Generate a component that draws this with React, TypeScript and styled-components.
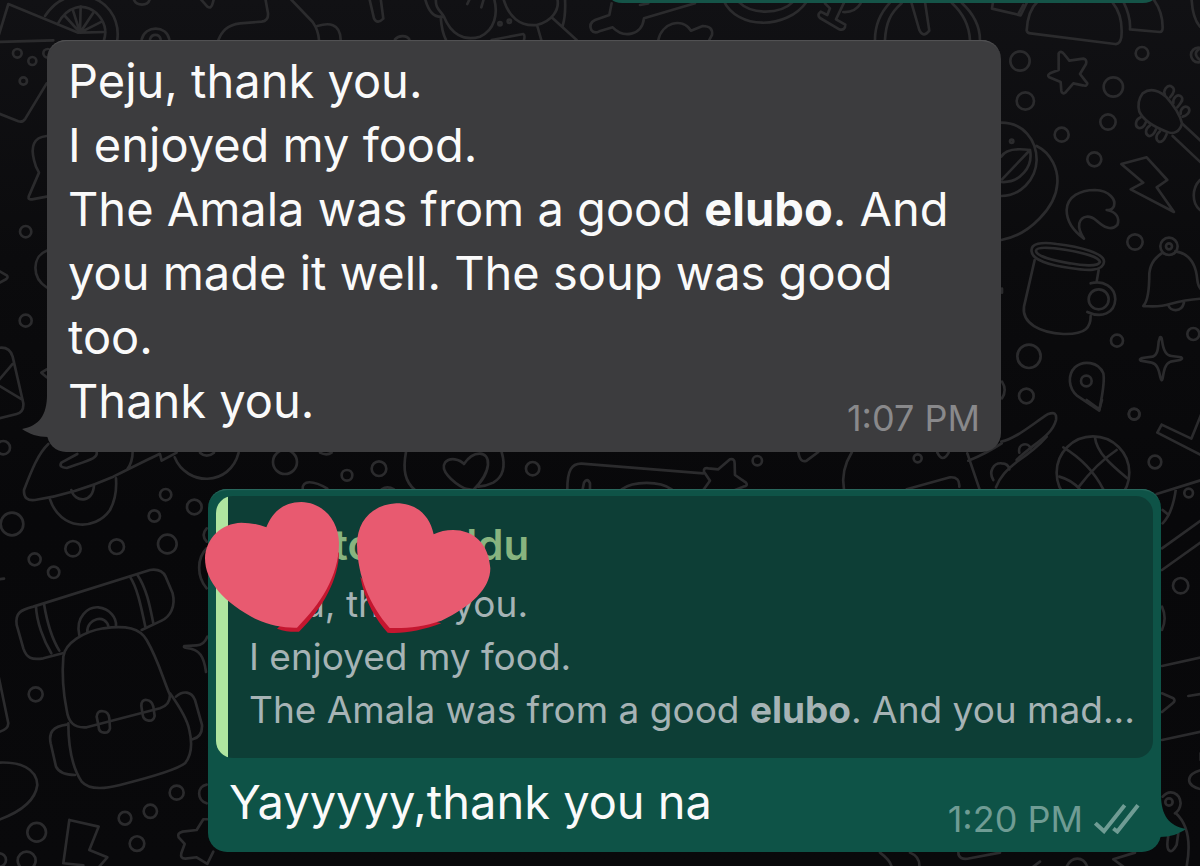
import React from "react";
import styled, { createGlobalStyle } from "styled-components";

const GlobalStyle = createGlobalStyle`
  * { box-sizing: border-box; }
  body {
    margin: 0;
    background: #09090b;
    font-family: Inter, "Liberation Sans", sans-serif;
  }
`;

type Side = "in" | "out";

const Screen = styled.main`
  position: relative;
  min-height: 100vh;
  overflow: hidden;
  background: linear-gradient(#111114, #0b0b0d 30%, #08080a 60%, #09090b);
`;

const Wallpaper = styled.svg`
  position: absolute;
  inset: 0;
  width: 100%;
  height: 100%;
  fill: none;
  stroke: #2b2b2d;
  stroke-width: 8;
  stroke-linecap: round;
  stroke-linejoin: round;
`;

const Thread = styled.div`
  position: relative;
  display: flex;
  flex-direction: column;
  gap: 37px;
  padding: 0 39px 14px 47px;
`;

const Clipped = styled.div`
  display: flex;
  align-items: flex-end;
  justify-content: flex-end;
  height: 3px;
  overflow: hidden;
`;

const PreviousBubble = styled.div`
  flex: none;
  width: 50%;
  height: 60px;
  border-radius: 18px;
  background: #155448;
`;

const Bubble = styled.article<{ $side: Side }>`
  position: relative;
  margin-left: ${(p) => (p.$side === "out" ? "161px" : "0")};
  margin-right: ${(p) => (p.$side === "in" ? "160px" : "0")};
  padding: ${(p) => (p.$side === "in" ? "9px 0 19px" : "7px 0 18px")};
  border-radius: 19px;
  background: ${(p) => (p.$side === "in" ? "#3c3c3e" : "#0e5347")};
  box-shadow: inset 0 2px 1px -1px ${(p) => (p.$side === "in" ? "#545456" : "#2c6a5f")};
`;

const Tail = styled.svg<{ $side: Side }>`
  position: absolute;
  bottom: 15px;
  width: 30px;
  height: 42px;
  fill: ${(p) => (p.$side === "in" ? "#3c3c3e" : "#0e5347")};
  ${(p) => (p.$side === "in" ? "left: -25px;" : "right: -25px; transform: scaleX(-1);")}
`;

const Text = styled.p`
  margin: 0;
  padding: 0 21px;
  color: #fafafa;
  font-size: 47px;
  line-height: 64px;
`;

const LastLine = styled.div`
  display: flex;
  align-items: flex-end;
  justify-content: space-between;
  padding-right: 21px;
`;

const Meta = styled.div<{ $side: Side }>`
  display: flex;
  align-items: center;
  gap: 11px;
  color: ${(p) => (p.$side === "in" ? "#89898b" : "#6f9c94")};
  font-size: 36px;
  line-height: 30px;
  white-space: nowrap;
`;

const Ticks = styled.svg`
  width: 46px;
  height: 31px;
  fill: none;
  stroke: currentColor;
  stroke-width: 12;
`;

const Quote = styled.blockquote`
  margin: 0 8px 12px;
  padding: 17px 18px 22px 33px;
  border-radius: 17px;
  background: linear-gradient(to right, #b0e5a0 12px, #0d3e36 12px);
  color: #a6b3b5;
  font-size: 37px;
  line-height: 53px;
`;

const QuoteName = styled.div`
  display: flex;
  gap: 78px;
  padding-left: 84px;
  color: #88b47f;
  font-size: 42px;
  font-weight: 600;
  line-height: 64px;
`;

const QuoteLine = styled.p`
  margin: 0;
  white-space: nowrap;
`;

const Hearts = styled.svg`
  position: absolute;
  top: 11px;
  left: -5px;
  width: 290px;
  height: 135px;
`;

const TAIL = "M25 0C25 20 17 31 0 34C7 39 16 42 26 42L30 42V0Z";

function BubbleTail({ side }: { side: Side }) {
  return (
    <Tail $side={side} viewBox="0 0 30 42" aria-hidden="true">
      <path d={TAIL} />
    </Tail>
  );
}

/* Each group is drawn at three times its size on the wallpaper. */
function Patch({ x, y, d, dots }: { x: number; y: number; d: string[]; dots: number[][] }) {
  return (
    <g transform={`translate(${x} ${y}) scale(0.3333)`}>
      {d.map((path) => (
        <path key={path} d={path} />
      ))}
      {dots.map(([cx, cy, r]) => (
        <circle key={`${cx}-${cy}-${r}`} cx={cx} cy={cy} r={r} />
      ))}
    </g>
  );
}

function Doodles() {
  return (
    <Wallpaper viewBox="0 0 1200 866" preserveAspectRatio="xMidYMin slice" aria-hidden="true">
      {/* drink and lemon slice, left edge */}
      <Patch
        x={0}
        y={0}
        d={[
          "M-5 110L25 12L235 98",
          "M-5 126L160 121",
          "M135 48C170 -5 215 -15 250 -12C320 -5 360 55 352 120",
          "M173 72C200 20 250 5 290 40C315 65 320 95 312 120",
          "M240 98L195 48M240 98L218 28M240 98L242 20M240 98L280 38M240 98L305 65M240 98L315 96",
          "M-5 340L55 364Q68 368 76 356L140 250",
          "M140 408C100 412 92 440 102 480Q106 500 117 518L86 590Q84 600 96 598L140 590",
          "M140 752C95 770 95 835 140 862",
          "M-5 812L20 826Q26 832 18 838L-5 850",
          "M-5 545V600",
          "M140 1108L124 1118L140 1132",
          "M-5 1044C20 1040 32 1050 38 1070L70 1210Q72 1236 50 1242L-5 1256M-5 1142L38 1092M-5 1156L68 1200",
          "M425 118C435 75 500 75 508 118M450 118C455 100 478 100 482 118",
          "M400 -5C408 20 445 20 450 -5",
        ]}
        dots={[
          [52, 160, 13],
          [97, 183, 12],
          [143, 160, 13],
          [70, 243, 11],
          [77, 695, 17],
          [77, 962, 18],
        ]}
      />
      {/* strip above the incoming bubble */}
      <Patch
        x={180}
        y={0}
        d={[
          "M60 -5L82 20Q94 28 98 10L102 -5",
          "M256 -5L264 40Q266 62 245 65L180 70C140 75 125 95 115 120",
          "M330 -5L398 66Q415 90 417 120M412 78C445 68 480 68 482 118",
          "M568 -5L582 55Q592 74 610 56L602 -5",
          "M735 -5C745 35 765 55 792 50C780 30 765 25 768 -5M782 50C785 90 790 105 798 120M792 50C812 100 850 125 900 110C945 90 955 40 942 -5",
          "M870 -5L862 12M912 -5L904 22M645 118C655 106 680 104 688 118",
          "M970 -5C985 50 1020 80 1070 75C1115 65 1140 30 1132 -5M1155 -5Q1158 45 1148 78M1115 52L1190 120M1072 78L1084 120",
          "M935 120L1030 102Q1036 106 1032 120",
        ]}
        dots={[
          [960, 71, 5],
          [988, 64, 5],
        ]}
      />
      <Patch
        x={580}
        y={0}
        d={[
          "M95 10L88 45L45 60Q25 70 34 90Q42 102 58 94L98 82C130 115 185 108 192 55L345 10M180 15L205 10",
          "M235 120C245 70 305 50 333 92L368 78Q400 78 396 105L388 120",
          "M430 0C470 90 620 90 680 5M475 5C515 45 600 45 640 5",
          "M735 10L750 25L742 45L722 35Q710 45 720 54L778 88Q796 92 796 74L768 58L792 8M790 36Q825 38 842 10",
          "M885 120C885 75 900 40 930 8M915 120C918 70 930 40 965 10M1115 8C1150 40 1168 80 1170 120M1145 8C1185 45 1200 80 1200 120",
          "M995 10L1018 90Q1030 115 1048 92L1035 5",
          "M1240 0L1236 26L1322 46L1342 5",
        ]}
        dots={[]}
      />
      <Patch
        x={1020}
        y={0}
        d={[
          "M20 92C22 50 35 20 55 2M20 92Q22 100 32 100L285 132Q300 134 304 112C308 70 300 35 278 8",
          "M310 5C325 35 332 60 330 88L420 96Q428 96 428 82C428 50 420 25 402 0",
          "M515 0Q518 55 540 80M540 145Q515 160 540 180",
          "M-4 40L10 15",
        ]}
        dots={[[366, 160, 19]]}
      />
      {/* right-hand column */}
      <Patch
        x={980}
        y={60}
        d={[
          "M236 -20Q242 -30 252 -18L268 2L310 -4Q322 -2 318 12L300 42L322 70Q322 80 308 76L280 70L256 98Q246 104 244 92L242 66L208 52Q200 46 210 40L236 30Z",
          "M488 100C515 80 540 95 558 110C585 140 600 165 606 190C600 215 580 225 560 215C520 200 490 180 478 155Q470 125 488 100Z",
          "M555 105C548 90 562 75 572 78C588 85 582 100 570 112M580 130C578 112 594 100 604 110C614 120 600 130 592 142M602 162C600 145 616 134 626 144C634 156 618 168 608 170",
          "M482 172C465 180 464 200 476 204C488 206 494 196 498 186M510 196C496 206 494 222 506 228C518 230 524 218 528 208M540 214C526 226 526 240 538 246C552 246 556 232 560 222",
          "M608 192L665 245M578 228L665 310",
          "M424 312L500 292L562 360L530 382L582 456L452 388L490 368Z",
          "M660 360C635 385 635 430 660 450",
          "M312 536C290 520 260 490 260 450C262 410 300 390 345 390C390 392 408 420 402 438Q398 452 380 450C410 455 420 475 412 495C395 515 370 500 350 482C330 465 305 465 298 490Q294 510 312 536Z",
          "M64 188C130 188 170 240 170 300C168 360 120 408 64 408M170 258C215 280 235 330 232 370C228 440 150 525 64 540",
          "M64 290C75 270 105 264 150 270C160 320 120 370 64 366M150 270L66 358",
          "M155 575C150 550 185 545 230 552C300 560 375 580 372 606C370 635 320 632 270 624C210 616 158 600 155 575Z",
          "M168 572C170 560 210 562 260 570C310 578 358 592 360 606C355 620 310 618 270 610C220 602 168 588 168 572Z",
          "M164 600L132 740C125 790 180 818 250 822C320 824 332 800 332 768M356 630L350 665M332 670C370 660 405 680 406 718C404 760 365 776 322 756",
          "M490 738Q508 720 508 640C512 605 530 590 548 578M586 574C625 580 648 610 652 660Q654 680 665 690M490 738Q540 742 570 732Q620 718 665 716M565 735C570 755 605 758 612 728",
          "M540 832Q544 828 546 840C550 875 560 888 575 888L604 892Q610 896 600 900L572 905C555 912 552 930 548 955Q545 968 541 952C536 925 530 912 515 908L482 902Q476 898 486 894L518 890C532 885 534 870 536 845Z",
          "M358 1052L292 1008C265 985 262 945 285 922C310 900 355 905 370 940C376 970 364 1015 358 1052Z",
          "M545 1094L634 1136L665 1060M545 1094L532 1118L665 1186",
          "M64 1145C110 1135 160 1090 205 1062Q232 1052 228 1080C215 1130 160 1150 110 1200M118 1178C112 1150 145 1145 152 1166",
          "M66 965Q82 990 66 1015M66 686V698",
        ]}
        dots={[
          [120, 3, 29],
          [136, 123, 26],
          [400, 81, 29],
          [384, 186, 23],
          [245, 224, 21],
          [343, 298, 21],
          [95, 244, 5],
          [465, 546, 23],
          [356, 718, 30],
          [567, 559, 26],
          [567, 559, 9],
          [640, 822, 18],
          [411, 842, 18],
          [147, 889, 35],
          [139, 1008, 22],
          [319, 963, 16],
          [462, 1062, 16],
          [655, -15, 22],
        ]}
      />
      {/* beneath the incoming bubble */}
      <Patch
        x={0}
        y={380}
        d={[
          "M145 192C115 220 95 270 72 330Q70 364 105 360C200 345 290 312 340 290C400 260 440 240 478 222M398 215Q398 245 382 268M290 215C295 235 270 240 200 264Q175 262 184 248L232 222",
          "M150 358C180 450 285 455 330 390Q352 350 348 295M214 330C225 370 280 370 282 315",
          "M480 222L485 242L530 218M524 232C560 320 690 320 716 218M600 218Q620 236 642 218",
          "M50 735C45 700 60 690 100 680L450 570Q485 565 497 590L518 640C528 680 510 710 485 722L425 750M50 735L70 805C80 835 95 840 130 835L188 820",
          "M108 680C110 725 130 780 154 820M132 672C140 720 152 770 178 812M390 590C415 630 425 690 436 740M412 584C440 625 450 680 460 730",
          "M238 766C225 710 265 680 295 682C330 685 350 715 348 738M262 756C260 715 318 700 326 742",
          "M190 830C195 790 250 755 310 745C380 735 420 745 440 780C475 840 490 900 510 945Q510 975 480 985L260 1042C220 1045 205 1025 200 990C188 930 186 880 190 830Z",
          "M205 1030C205 1090 215 1160 245 1205C265 1228 310 1228 360 1215C440 1195 530 1170 555 1150C580 1120 575 1080 568 1050Q560 1010 510 940",
          "M200 1034C160 1040 145 1055 152 1090L168 1160Q180 1185 225 1185M528 950C550 930 575 935 585 960L606 1035Q608 1070 578 1078",
          "M290 1010Q292 990 310 994Q326 996 328 1015L330 1045Q326 1060 312 1058Q296 1056 296 1040ZM424 978Q424 958 440 960Q456 962 460 980L464 1008Q460 1024 446 1022Q430 1020 428 1004Z",
          "M-5 885L25 1030Q24 1050 -5 1056M-5 1148C60 1145 110 1165 112 1215C105 1270 50 1300 -5 1320M-5 598L12 596",
          "M208 1320L296 1340L268 1410L322 1432L285 1475M208 1320L190 1450L250 1456",
          "M622 1318L610 1318L590 1350L548 1355Q530 1360 536 1372L554 1392L544 1420Q540 1436 556 1436L590 1432L622 1452L640 1415",
          "M622 770Q612 795 590 796L554 798Q548 802 560 804C600 808 612 830 618 876M620 445Q602 465 620 485M620 505C590 535 590 590 620 625M620 1214C590 1220 590 1260 620 1270",
        ]}
        dots={[
          [10, 203, 20],
          [36, 432, 34],
          [497, 344, 17],
          [583, 381, 22],
          [463, 408, 17],
          [502, 492, 28],
          [350, 500, 22],
          [219, 506, 23],
          [104, 538, 18],
          [161, 577, 17],
          [107, 943, 21],
          [530, 1238, 21],
          [451, 1294, 20],
          [375, 1315, 19],
          [411, 1391, 22],
          [110, 1357, 28],
          [80, 1442, 27],
          [-2, 1440, 20],
        ]}
      />
      <Patch
        x={150}
        y={440}
        d={[
          "M768 36C758 90 765 125 795 150M1055 36C1068 80 1060 110 1030 128Q1010 138 985 140M942 72C970 30 1018 30 1014 75C1010 110 985 135 970 150L945 146C905 125 870 90 885 68C900 50 930 58 942 72Z",
          "M458 148C455 120 490 120 532 146M695 148Q712 136 732 148M510 38Q530 48 545 38",
        ]}
        dots={[
          [405, 66, 36],
          [591, 106, 16],
          [687, 86, 22],
          [1148, 86, 20],
        ]}
      />
      <Patch
        x={400}
        y={420}
        d={[
          "M502 208C502 150 515 130 545 131L910 160M548 208L552 188Q562 172 570 190V208M665 208C700 182 780 182 815 208",
          "M910 210L930 182L912 155Q910 142 925 145L955 148L990 118Q1004 114 1004 130L1005 165L1038 188Q1046 198 1030 200L1000 212",
          "M1195 96Q1200 130 1220 122L1255 96M1356 96C1335 130 1325 170 1332 208",
        ]}
        dots={[[1072, 122, 14]]}
      />
      {/* ball, rocket and lower right corner */}
      <Patch
        x={850}
        y={400}
        d={[
          "M352 160L388 266M355 182Q410 160 455 130M430 240C415 215 430 188 455 190Q475 190 478 208M438 262C450 230 470 210 500 186Q560 145 590 110",
          "M170 268L300 232Q330 230 328 260M262 158Q278 190 296 158M710 0L748 28L756 0",
          "M640 142Q720 190 760 268M735 112C740 160 790 200 832 235M800 150Q740 190 685 262M628 230Q665 240 690 268",
          "M920 282L1055 240M978 265Q968 340 938 370M938 330L956 345M936 445L1055 360M936 510L1055 425M936 798L1055 772M936 1020L1055 995M936 880L970 895Q978 902 968 910L936 936M1015 888L1055 882",
          "M936 620Q952 655 936 690M1055 1110C1005 1120 1005 1160 1055 1168M1052 1060V1080",
          "M938 1190C960 1165 990 1180 992 1210Q990 1230 975 1240M978 1240C1010 1270 1025 1320 1010 1400M955 1308C945 1360 965 1365 980 1335L985 1300",
          "M325 1358Q325 1382 360 1375L450 1358M90 1358Q120 1380 125 1400M180 1358Q210 1370 208 1400M855 1358L790 1378L820 1400M650 1400C665 1368 700 1368 712 1400M550 1400L570 1385",
        ]}
        dots={[
          [729, 218, 109],
          [853, 43, 16],
          [915, 186, 19],
          [1016, 279, 13],
          [992, 557, 23],
          [203, 175, 12],
          [957, 1206, 11],
        ]}
      />
    </Wallpaper>
  );
}

export default function App() {
  return (
    <Screen>
      <GlobalStyle />
      <Doodles />
      <Thread>
        <Clipped>
          <PreviousBubble />
        </Clipped>

        <Bubble $side="in">
          <BubbleTail side="in" />
          <Text>Peju, thank you.</Text>
          <Text>I enjoyed my food.</Text>
          <Text>
            The Amala was from a good <b>elubo</b>
            <span>. And</span> you made it well. The soup was good too.
          </Text>
          <LastLine>
            <Text>Thank you.</Text>
            <Meta $side="in" as="time">1:07 PM</Meta>
          </LastLine>
        </Bubble>

        <Bubble $side="out">
          <BubbleTail side="out" />
          <Quote>
            <QuoteName>
              <span>to</span>
              <span>ddu</span>
            </QuoteName>
            <QuoteLine>Peju, thank you.</QuoteLine>
            <QuoteLine>I enjoyed my food.</QuoteLine>
            <QuoteLine>
              The Amala was from a good <b>elubo</b>. And you mad...
            </QuoteLine>
          </Quote>
          <LastLine>
            <Text>Yayyyyy,thank you na</Text>
            <Meta $side="out">
              <time>1:20 PM</time>
              <Ticks viewBox="738 1206 138 92" role="img" aria-label="Delivered">
                <path d="M742 1266L768 1290L830 1212M796 1282L808 1291L870 1212" />
              </Ticks>
            </Meta>
          </LastLine>
          <Hearts viewBox="40 60 870 405" role="img" aria-label="Two hearts">
            <path
              fill="#c4162f"
              d="M448 215C448 295 400 385 328 455C305 456 285 454 262 446L322 390Z"
            />
            <path
              fill="#e85a70"
              d="M230 142C250 92 285 66 335 66C400 68 447 120 448 190C448 290 390 375 322 443C285 444 240 437 200 418C105 370 46 305 46 235C48 175 95 130 155 128Q195 128 230 142Z"
            />
            <path
              fill="#c4162f"
              d="M512 290C525 365 560 420 594 458C640 462 695 452 755 430L600 390Z"
            />
            <path
              fill="#e85a70"
              d="M732 163C720 105 680 70 620 70C550 74 502 120 502 195C504 290 540 375 600 444C650 446 700 440 755 422C845 380 902 325 902 265C898 190 850 150 790 150Q758 150 732 163Z"
            />
          </Hearts>
        </Bubble>
      </Thread>
    </Screen>
  );
}
